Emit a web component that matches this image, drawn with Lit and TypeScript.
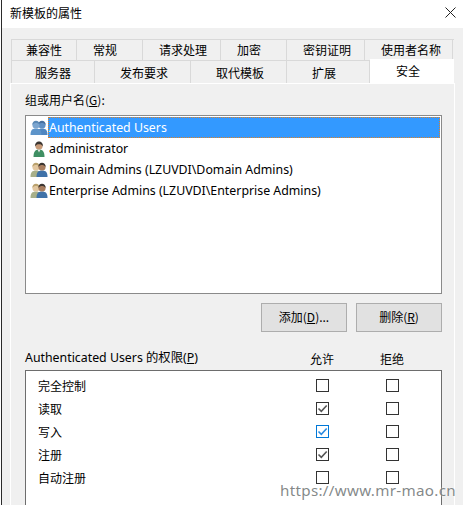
import { LitElement, html, css, svg } from "lit";
import { customElement } from "lit/decorators.js";

const person = (dx: number, head: string, body: string, hair: string) => svg`
  <g transform="translate(${dx} 0)">
    <path d="M.5 15c0-4.500 1.500-6.500 5.500-6.500s5.500 2 5.500 6.500z" fill=${body} />
    <circle cx="6" cy="5" r="3.600" fill=${head} />
    <path d="M2.400 5c0-3.200 1.600-4.300 3.600-4.300s3.600 1.100 3.600 4.300c-1-1.500-2.200-1.900-3.600-1.900S3.400 3.500 2.400 5z" fill=${hair} />
  </g>`;

const usersIcon = html`<svg class="ico" viewBox="0 0 18 16">
  ${person(6, "#5f8fc4", "#4f86c0", "#47709f")}${person(0, "#7ba5cf", "#5d94c9", "#5b89b5")}
</svg>`;
const adminIcon = html`<svg class="ico" viewBox="0 0 18 16">
  <path d="M3.500 16c0-5 1.500-7.500 5.500-7.500s5.500 2.500 5.500 7.500z" fill="#3f8f63" />
  <path d="M7.500 8.500h3l-1.500 3z" fill="#e8e8e8" />
  <circle cx="9" cy="5" r="3.600" fill="#c79a78" />
  <path d="M5.200 5.500C4.800 2 6.800.5 9 .5s4.200 1.500 3.800 5c-.8-1.800-2-2.300-3.800-2.300s-3 .5-3.800 2.300z" fill="#3a3531" />
</svg>`;
const groupIcon = html`<svg class="ico" viewBox="0 0 18 16">
  ${person(0, "#e2c7a0", "#a8b08a", "#b9a26f")}${person(6, "#a87e60", "#3f72a8", "#3b3632")}
</svg>`;

const mark = (blue: boolean) => html`<svg class="tick ${blue ? "blue" : ""}" viewBox="0 0 11 11">
  <path d="M1.500 5.500 4.300 8.300 9.700 2.500" />
</svg>`;

@customElement("app-root")
export class AppRoot extends LitElement {
  static styles = css`
    :host {
      display: block;
      width: 463px;
      height: 505px;
      overflow: hidden;
      position: relative;
      background: #fff;
      font-family: "Noto Sans", "Noto Sans CJK SC", sans-serif;
      font-size: 12px;
      color: #000;
    }
    .window {
      height: 505px;
      margin-left: 1px;
      border-left: 1px solid #2b2b2b;
      display: flex;
      flex-direction: column;
      background: #f0f0f0;
    }
    .title {
      flex: none;
      height: 28px;
      box-sizing: border-box;
      background: #fff;
      padding: 0 0 3px 8px;
      display: flex;
      align-items: center;
      justify-content: space-between;
      font-family: "Noto Sans CJK SC", sans-serif;
      font-size: 12px;
    }
    .close { width: 11px; height: 11px; margin-right: 7px; }
    .close path { stroke: #222; stroke-width: 1; fill: none; }
    .content { flex: 1; min-height: 0; padding: 11px 0 0 9px; display: flex; flex-direction: column; }
    .tabs-row {
      display: grid;
      height: 22px;
      width: 443px;
      box-sizing: border-box;
      border-top: 1px solid #d9d9d9;
      border-left: 1px solid #d9d9d9;
      font-family: "Noto Sans CJK SC", sans-serif;
    }
    .r1 { grid-template-columns: 65px 66px 78px 66px 78px 88px; }
    .r2 { grid-template-columns: 83px 96px 96px 83px 84px; border-top: none; }
    .tab {
      display: flex;
      align-items: center;
      box-sizing: border-box;
      border-right: 1px solid #d9d9d9;
      border-bottom: 1px solid #d9d9d9;
    }
    .r1 .tab { padding: 0 0 2px 16px; }
    .r1 .tab:first-child { padding-left: 14px; }
    .r2 .tab { padding-left: 25px; }
    .r2 .tab:first-child { padding-left: 23px; }
    .r2 .tab.active {
      position: relative;
      background: #fff;
      border: none;
      margin-top: -2px;
      height: 25px;
      z-index: 1;
      padding: 0 0 2px 26px;
    }
    .panel {
      flex: 1;
      min-height: 0;
      width: 445px;
      margin-left: -1px;
      box-sizing: border-box;
      border: solid #fff;
      border-width: 1px 1px 0 1px;
      padding: 8px 12px 0 14px;
      display: flex;
      flex-direction: column;
    }
    .label { line-height: 16px; font-size: 12px; font-family: "Noto Sans CJK SC", sans-serif; }
    .label.latin { font-family: "Noto Sans", "Noto Sans CJK SC", sans-serif; font-size: 12.350px; }
    u { text-underline-offset: 1px; }
    .list {
      margin-top: 7px;
      height: 179px;
      box-sizing: border-box;
      border: 1px solid #8a8a8a;
      background: #fff;
      padding: 1px 1px 0 4px;
    }
    .row { display: flex; align-items: center; height: 21px; }
    .ico { width: 18px; height: 16px; flex: none; }
    .row span {
      flex: 1;
      height: 21px;
      line-height: 22px;
      padding-left: 1px;
      box-sizing: border-box;
      font-size: 12.350px;
      white-space: nowrap;
    }
    .row.sel span {
      background: #3399ff;
      color: #fff;
      outline: 1px dotted #d9812c;
      outline-offset: -1px;
    }
    .buttons { margin-top: 9px; display: flex; justify-content: flex-end; gap: 9px; }
    .btn {
      width: 86px;
      height: 29px;
      box-sizing: border-box;
      border: 1px solid #adadad;
      background: #e1e1e1;
      padding-bottom: 2px;
      display: flex;
      align-items: center;
      justify-content: center;
      font-family: "Noto Sans CJK SC", sans-serif;
    }
    .perm-head {
      margin-top: 17px;
      display: grid;
      grid-template-columns: 1fr 70px 70px 15px;
      height: 18px;
      align-items: center;
    }
    .perm-head .c { text-align: center; font-family: "Noto Sans CJK SC", sans-serif; }
    .perm {
      margin-top: 3px;
      flex: 1;
      min-height: 0;
      box-sizing: border-box;
      border: solid #6d6d6d;
      border-width: 1px 1px 0 1px;
      background: #fff;
      padding: 3px 0 0 12px;
      font-family: "Noto Sans CJK SC", sans-serif;
    }
    .prow {
      display: grid;
      grid-template-columns: 1fr 70px 70px 14px;
      height: 23px;
      align-items: center;
      justify-items: center;
    }
    .prow .name { justify-self: start; padding-bottom: 1px; }
    .box {
      width: 13px;
      height: 13px;
      box-sizing: border-box;
      border: 1px solid #333;
      display: flex;
    }
    .box.blue { border-color: #0078d7; }
    .tick { width: 11px; height: 11px; }
    .tick path { fill: none; stroke: #555; stroke-width: 1.600; }
    .tick.blue path { stroke: #2b8be0; }
    .wm {
      position: absolute;
      left: 280px;
      top: 478px;
      font-family: "Noto Sans", sans-serif;
      font-size: 15.200px;
      line-height: 24px;
      letter-spacing: 0.300px;
      color: rgba(110, 115, 115, 0.85);
      text-shadow: 0 0 2px rgba(255, 255, 255, 0.9);
      white-space: nowrap;
      z-index: 3;
    }
  `;

  render() {
    const r1 = ["兼容性", "常规", "请求处理", "加密", "密钥证明", "使用者名称"];
    const r2 = ["服务器", "发布要求", "取代模板", "扩展", "安全"];
    const users = [
      { n: "Authenticated Users", i: usersIcon, s: true },
      { n: "administrator", i: adminIcon, s: false },
      { n: "Domain Admins (LZUVDI\\Domain Admins)", i: groupIcon, s: false },
      { n: "Enterprise Admins (LZUVDI\\Enterprise Admins)", i: groupIcon, s: false },
    ];
    const perms: [string, number][] = [
      ["完全控制", 0],
      ["读取", 1],
      ["写入", 2],
      ["注册", 1],
      ["自动注册", 0],
    ];
    return html`
      <div class="window">
        <div class="title">
          <span>新模板的属性</span>
          <svg class="close" viewBox="0 0 11 11"><path d="M.5.5l10 10M10.500.5l-10 10" /></svg>
        </div>
        <div class="content">
          <div class="tabs-row r1">${r1.map((t) => html`<div class="tab">${t}</div>`)}</div>
          <div class="tabs-row r2">
            ${r2.map((t) => html`<div class="tab ${t === "安全" ? "active" : ""}">${t}</div>`)}
          </div>
          <div class="panel">
            <div class="label">组或用户名(<u>G</u>):</div>
            <div class="list">
              ${users.map(
                (u) => html`<div class="row ${u.s ? "sel" : ""}">${u.i}<span>${u.n}</span></div>`
              )}
            </div>
            <div class="buttons">
              <div class="btn"><span>添加(<u>D</u>)...</span></div>
              <div class="btn"><span>删除(<u>R</u>)</span></div>
            </div>
            <div class="perm-head">
              <div class="label latin">Authenticated Users 的权限(<u>P</u>)</div>
              <div class="c">允许</div>
              <div class="c">拒绝</div>
            </div>
            <div class="perm">
              ${perms.map(
                ([n, s]) => html`<div class="prow">
                  <div class="name">${n}</div>
                  <div class="box ${s === 2 ? "blue" : ""}">${s ? mark(s === 2) : ""}</div>
                  <div class="box"></div>
                </div>`
              )}
            </div>
          </div>
        </div>
      </div>
      <div class="wm">https://www.mr-mao.cn</div>
    `;
  }
}
